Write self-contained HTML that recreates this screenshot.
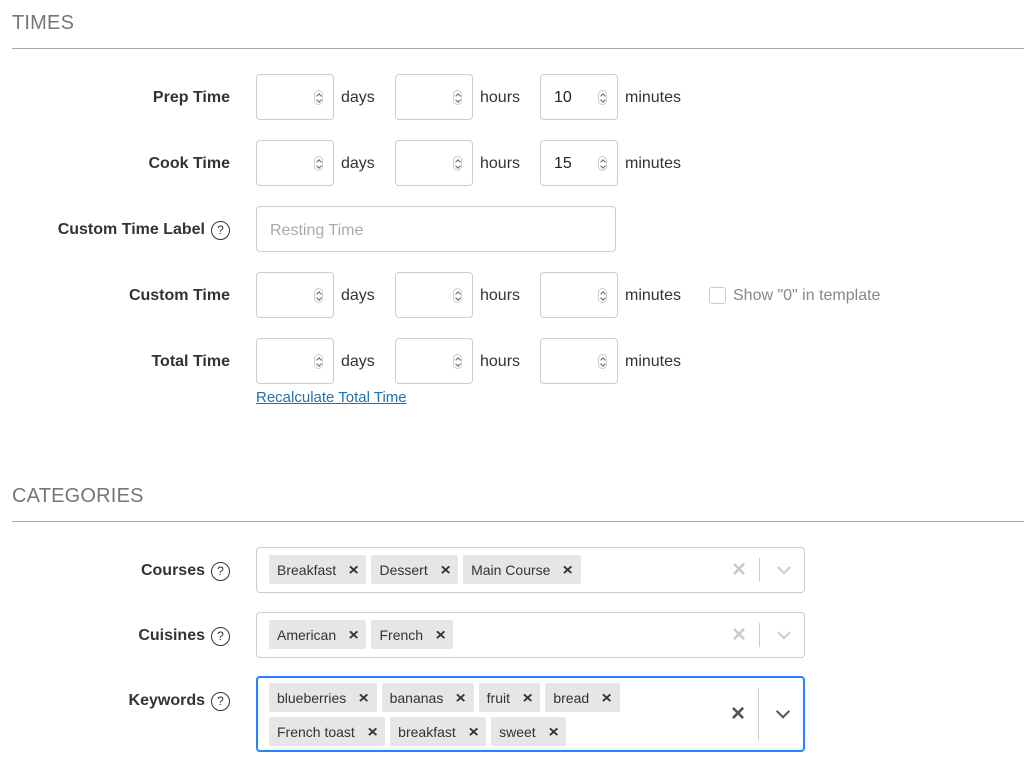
<!DOCTYPE html>
<html><head><meta charset="utf-8"><style>
*{box-sizing:border-box;margin:0;padding:0}
body{width:1024px;height:763px;background:#fff;font-family:"Liberation Sans",Arial,sans-serif;color:#333;position:relative;overflow:hidden}
.h{position:absolute;left:12px;font-size:20px;color:#72777c;letter-spacing:.2px}
.line{position:absolute;left:12px;right:0;height:1px;background:#a7aaad}
.lab{position:absolute;right:794px;font-size:16px;font-weight:bold;color:#333;height:46px;padding-top:2px;white-space:nowrap;display:flex;align-items:center;gap:6px}
.q{display:inline-block;width:19px;height:19px;border:1.3px solid #333;border-radius:50%;font-size:12px;line-height:16px;text-align:center;font-weight:normal}
.num{position:absolute;width:78px;height:46px;border:1px solid #ccc;border-radius:4px;font-size:16px;line-height:46px;padding-left:13px;color:#222}
.num .sp{position:absolute;left:57px;top:15px;width:9px;height:15px;border:1px solid #ccc;border-radius:5px}
.num .sp:before,.num .sp:after{content:"";position:absolute;left:2px;width:3px;height:3px;border-left:1px solid #666;border-top:1px solid #666}
.num .sp:before{top:3px;transform:rotate(45deg)}
.num .sp:after{top:7px;transform:rotate(225deg)}
.u{position:absolute;font-size:16px;line-height:48px;height:46px;color:#333}
.txt{position:absolute;left:256px;top:206px;width:360px;height:46px;border:1px solid #ccc;border-radius:4px;font-size:16px;color:#aaa;line-height:47px;padding-left:13px}
.link{position:absolute;left:256px;top:389px;font-size:15px;color:#2271b1;text-decoration:underline}
.sel{position:absolute;left:256px;width:549px;border:1px solid #ccc;border-radius:4px}
.tags{position:absolute;left:12px;top:7px;width:370px;display:flex;flex-wrap:wrap;gap:5px}
.tag{background:#e6e6e6;border-radius:2px;height:29px;line-height:30px;font-size:14px;padding:0 8px;color:#333;white-space:nowrap}
.tag b{margin-left:13px;font-size:16px;display:inline-block;transform:scaleX(1.1)}
.cx{position:absolute;right:58px;top:50%;transform:translateY(-50%);font-size:24px;color:#ccc;font-weight:bold}
.sep{position:absolute;right:44px;top:10px;bottom:10px;width:1px;background:#ccc}
.ch{position:absolute;right:15px;top:50%;width:10px;height:10px;border-right:2px solid #ccc;border-bottom:2px solid #ccc;transform:translateY(-75%) rotate(45deg)}
.cb{position:absolute;left:709px;top:287px;width:17px;height:17px;border:1px solid #ccc;border-radius:3px}
</style></head><body>
<div class="h" style="top:12px">TIMES</div><div class="line" style="top:48px"></div>

<div class="lab" style="top:74px">Prep Time</div>
<div class="lab" style="top:140px">Cook Time</div>
<div class="lab" style="top:206px">Custom Time Label <span class="q">?</span></div>
<div class="lab" style="top:272px">Custom Time</div>
<div class="lab" style="top:338px">Total Time</div>

<div class="num" style="left:256px;top:74px"><i class="sp"></i></div><div class="u" style="left:341px;top:74px">days</div>
<div class="num" style="left:395px;top:74px"><i class="sp"></i></div><div class="u" style="left:480px;top:74px">hours</div>
<div class="num" style="left:540px;top:74px">10<i class="sp"></i></div><div class="u" style="left:625px;top:74px">minutes</div>

<div class="num" style="left:256px;top:140px"><i class="sp"></i></div><div class="u" style="left:341px;top:140px">days</div>
<div class="num" style="left:395px;top:140px"><i class="sp"></i></div><div class="u" style="left:480px;top:140px">hours</div>
<div class="num" style="left:540px;top:140px">15<i class="sp"></i></div><div class="u" style="left:625px;top:140px">minutes</div>

<div class="txt">Resting Time</div>

<div class="num" style="left:256px;top:272px"><i class="sp"></i></div><div class="u" style="left:341px;top:272px">days</div>
<div class="num" style="left:395px;top:272px"><i class="sp"></i></div><div class="u" style="left:480px;top:272px">hours</div>
<div class="num" style="left:540px;top:272px"><i class="sp"></i></div><div class="u" style="left:625px;top:272px">minutes</div>
<div class="cb"></div><div class="u" style="left:733px;top:272px;color:#888">Show "0" in template</div>

<div class="num" style="left:256px;top:338px"><i class="sp"></i></div><div class="u" style="left:341px;top:338px">days</div>
<div class="num" style="left:395px;top:338px"><i class="sp"></i></div><div class="u" style="left:480px;top:338px">hours</div>
<div class="num" style="left:540px;top:338px"><i class="sp"></i></div><div class="u" style="left:625px;top:338px">minutes</div>
<div class="link">Recalculate Total Time</div>

<div class="h" style="top:485px">CATEGORIES</div><div class="line" style="top:521px"></div>

<div class="lab" style="top:547px">Courses <span class="q">?</span></div>
<div class="lab" style="top:612px">Cuisines <span class="q">?</span></div>
<div class="lab" style="top:677px">Keywords <span class="q">?</span></div>

<div class="sel" style="top:547px;height:46px"><div class="tags"><span class="tag">Breakfast<b>×</b></span><span class="tag">Dessert<b>×</b></span><span class="tag">Main Course<b>×</b></span></div><span class="cx">×</span><i class="sep"></i><i class="ch"></i></div>
<div class="sel" style="top:612px;height:46px"><div class="tags"><span class="tag">American<b>×</b></span><span class="tag">French<b>×</b></span></div><span class="cx">×</span><i class="sep"></i><i class="ch"></i></div>
<div class="sel" style="top:676px;height:76px;border:2px solid #2684ff"><div class="tags" style="left:11px;top:5px;gap:5px"><span class="tag">blueberries<b>×</b></span><span class="tag">bananas<b>×</b></span><span class="tag">fruit<b>×</b></span><span class="tag">bread<b>×</b></span><span class="tag">French toast<b>×</b></span><span class="tag">breakfast<b>×</b></span><span class="tag">sweet<b>×</b></span></div><span class="cx" style="color:#555">×</span><i class="sep"></i><i class="ch" style="border-color:#555"></i></div>
</body></html>
